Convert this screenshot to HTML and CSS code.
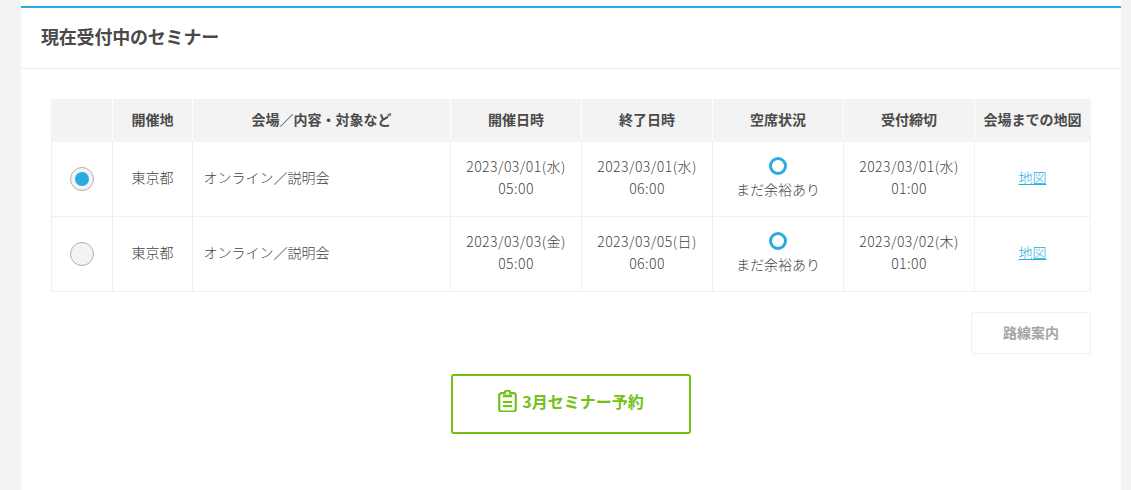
FILE: index.html
```html
<!DOCTYPE html>
<html lang="ja">
<head>
<meta charset="utf-8">
<title>現在受付中のセミナー</title>
<link rel="stylesheet" href="styles.css">
</head>
<body>
<main class="panel">
  <section class="card">
    <h2 class="card-title">現在受付中のセミナー</h2>
    <div class="card-body">
      <table class="seminars">
        <colgroup>
          <col class="c-radio"><col class="c-place"><col class="c-venue"><col class="c-date"><col class="c-date"><col class="c-date"><col class="c-date"><col class="c-map">
        </colgroup>
        <thead>
          <tr><th></th><th>開催地</th><th>会場／内容・対象など</th><th>開催日時</th><th>終了日時</th><th>空席状況</th><th>受付締切</th><th>会場までの地図</th></tr>
        </thead>
        <tbody>
          <tr>
            <td class="radio-cell"><span class="radio radio-on"></span></td>
            <td class="solo">東京都</td>
            <td class="solo left">オンライン／説明会</td>
            <td class="date">2023/03/01(水)<br>05:00</td>
            <td class="date">2023/03/01(水)<br>06:00</td>
            <td class="seat-cell"><span class="ring"></span><span class="seat">まだ余裕あり</span></td>
            <td class="date">2023/03/01(水)<br>01:00</td>
            <td class="solo"><a class="map" href="#">地図</a></td>
          </tr>
          <tr>
            <td class="radio-cell"><span class="radio"></span></td>
            <td class="solo">東京都</td>
            <td class="solo left">オンライン／説明会</td>
            <td class="date">2023/03/03(金)<br>05:00</td>
            <td class="date">2023/03/05(日)<br>06:00</td>
            <td class="seat-cell"><span class="ring"></span><span class="seat">まだ余裕あり</span></td>
            <td class="date">2023/03/02(木)<br>01:00</td>
            <td class="solo"><a class="map" href="#">地図</a></td>
          </tr>
        </tbody>
      </table>
      <div class="route-row"><a class="route" href="#">路線案内</a></div>
      <div class="cta-row">
        <a class="cta" href="#">
          <svg class="cta-icon" width="20" height="24" viewBox="0 0 20 24" aria-hidden="true">
            <path d="M7 3.500a3 3 0 0 1 6 0h3.500A2.500 2.500 0 0 1 19 6v15a2.500 2.500 0 0 1-2.500 2.500h-13A2.500 2.500 0 0 1 1 21V6a2.500 2.500 0 0 1 2.500-2.500Z" fill="none" stroke="#72c213" stroke-width="2.400"/>
            <rect x="5" y="5" width="10" height="3" fill="#72c213"/>
            <rect x="5" y="12" width="10" height="2.200" fill="#72c213"/>
            <rect x="5" y="16.500" width="10" height="2.200" fill="#72c213"/>
          </svg>
          <span>3月セミナー予約</span>
        </a>
      </div>
    </div>
  </section>
</main>
</body>
</html>
```
FILE: styles.css
```css
html, body {
  margin: 0;
  padding: 0;
  height: 490px;
  overflow: hidden;
  background: #f3f3f3;
}
body {
  font-family: "Noto Sans CJK JP", "Noto Sans", sans-serif;
  color: #444;
}
.panel {
  width: 1100px;
  height: 490px;
  margin-left: 21px;
  padding-top: 6px;
  box-sizing: border-box;
  background: #fff;
  overflow: hidden;
}
.card {
  border-top: 2px solid #29abe2;
}
.card-title {
  margin: 0;
  height: 60px;
  line-height: 57px;
  padding-left: 20px;
  font-size: 18px;
  font-weight: 700;
  letter-spacing: -0.2px;
  color: #4a4a4a;
  border-bottom: 1px solid #ececec;
}
.card-body {
  padding: 30px 30px 0;
}
.seminars {
  width: 1040px;
  table-layout: fixed;
  border-collapse: collapse;
  font-size: 14px;
}
.c-radio { width: 61px; }
.c-place { width: 80px; }
.c-venue { width: 258px; }
.c-date { width: 131px; }
.c-map { width: 116px; }
.seminars th, .seminars td {
  border: 1px solid #f0f0f0;
  text-align: center;
  padding: 0;
}
.seminars th {
  height: 37px;
  padding-bottom: 4px;
  background: #f3f3f3;
  border-color: #f3f3f3;
  border-left-color: #fff;
  border-right-color: #fff;
  font-weight: 700;
  color: #4a4a4a;
}
.seminars th:first-child { border-left-color: #f3f3f3; }
.seminars th:last-child { border-right-color: #f3f3f3; }
.seminars td {
  height: 74px;
  font-weight: 300;
  color: #444;
}
.seminars td.solo {
  height: 69px;
  padding-bottom: 5px;
}
.seminars td.left {
  text-align: left;
  padding-left: 10.500px;
}
.seminars td.date {
  height: 70px;
  padding-bottom: 4px;
  line-height: 22px;
  letter-spacing: 0.45px;
}
.seminars td.seat-cell {
  height: 71px;
  padding-bottom: 3px;
}
.radio {
  display: block;
  width: 22px;
  height: 22px;
  margin: 0 auto;
  border: 1px solid #b0b0b0;
  border-radius: 50%;
  background: #f3f3f3;
  position: relative;
}
.radio-on::after {
  content: "";
  position: absolute;
  left: 4px;
  top: 4px;
  width: 14px;
  height: 14px;
  border-radius: 50%;
  background: #29abe2;
}
.ring {
  display: block;
  width: 18px;
  height: 18px;
  box-sizing: border-box;
  margin: 0 auto 4px;
  border: 3px solid #29abe2;
  border-radius: 50%;
}
.seat {
  display: block;
  line-height: 20px;
}
.map {
  color: #29abe2;
  text-decoration: underline;
}
.route-row {
  display: flex;
  justify-content: flex-end;
  margin-top: 20px;
}
.route {
  width: 120px;
  height: 42px;
  box-sizing: border-box;
  display: flex;
  align-items: center;
  justify-content: center;
  padding-bottom: 3px;
  border: 1px solid #f0f0f0;
  border-radius: 3px;
  font-size: 14px;
  font-weight: 700;
  color: #a5a5a5;
  text-decoration: none;
}
.cta-row {
  display: flex;
  justify-content: center;
  margin-top: 20px;
}
.cta {
  width: 240px;
  height: 60px;
  box-sizing: border-box;
  display: flex;
  align-items: center;
  justify-content: center;
  gap: 5px;
  padding-bottom: 6px;
  border: 2px solid #72c213;
  border-radius: 3px;
  font-size: 16px;
  font-weight: 700;
  color: #72c213;
  text-decoration: none;
}
.cta-icon {
  display: block;
  flex: none;
  width: 19px;
  height: 22px;
}
```
